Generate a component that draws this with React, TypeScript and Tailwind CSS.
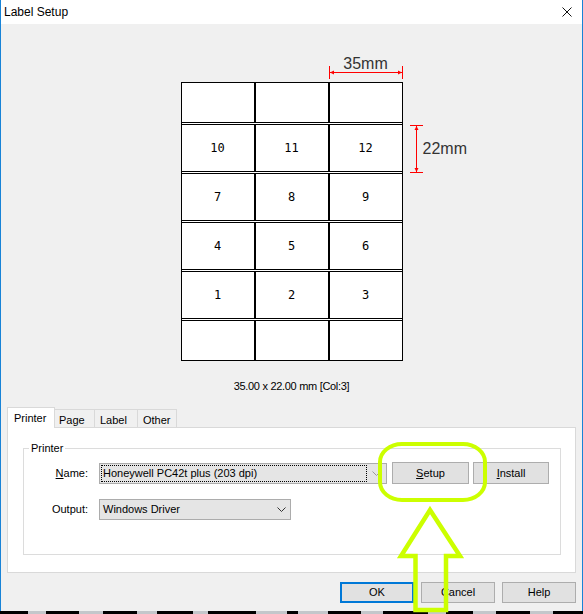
import React from 'react';

const ROWS = [
  ['10', '11', '12'],
  ['7', '8', '9'],
  ['4', '5', '6'],
  ['1', '2', '3'],
];

const TABS = ['Page', 'Label', 'Other'];

function LabelRow({ cells, className }: { cells: string[]; className: string }) {
  return (
    <div className={`grid grid-cols-[72px_74px_74px] border-black ${className}`}>
      {cells.map((c, i) => (
        <div
          key={i}
          className={`flex items-center justify-center font-['DejaVu_Sans_Mono',monospace] text-[12px] ${i > 0 ? 'border-l-2 border-black' : ''}`}
        >
          {c}
        </div>
      ))}
    </div>
  );
}

function Chevron({ color }: { color: string }) {
  return (
    <svg width="9" height="5" viewBox="0 0 9 5">
      <polyline points="0.5,0.5 4.5,4.5 8.5,0.5" fill="none" stroke={color} strokeWidth="1" />
    </svg>
  );
}

export default function App() {
  return (
    <div className="relative w-[583px] h-[614px] bg-black font-['Liberation_Sans',Arial,sans-serif] text-black">
      <div className="flex flex-col h-[611px] bg-[#f0f0f0] border-x border-[#1883d7]">
        {/* title bar */}
        <div className="flex items-center justify-between h-[24px] bg-white pl-[3px] pr-[10px] shrink-0">
          <span className="text-[12px]">Label Setup</span>
          <svg width="10" height="10" viewBox="0 0 10 10">
            <path d="M0.5 0.5 L9.5 9.5 M9.5 0.5 L0.5 9.5" stroke="#111" strokeWidth="1" />
          </svg>
        </div>

        {/* preview */}
        <div className="flex justify-center pt-[32px]">
          <div className="w-[64px]" />
          <div className="flex flex-col w-[222px]">
            <div className="flex flex-col items-end">
              <div className="w-[74px] text-center text-[16px] leading-[16px] text-[#333]">35mm</div>
              <svg width="76" height="13" viewBox="0 0 76 13" className="-mt-[6px] -mr-px">
                <line x1="1.5" y1="0" x2="1.5" y2="13" stroke="#ff0000" />
                <line x1="74.5" y1="0" x2="74.5" y2="13" stroke="#ff0000" />
                <line x1="1.5" y1="6.5" x2="74.5" y2="6.5" stroke="#ff0000" />
                <polygon points="2,6.5 6,4.5 6,8.5" fill="#ff0000" />
                <polygon points="74,6.5 70,4.5 70,8.5" fill="#ff0000" />
              </svg>
            </div>
            <div className="mt-[3px] flex flex-col gap-px bg-white border border-black">
              <LabelRow cells={['', '', '']} className="h-[40px] border-b" />
              {ROWS.map((r, i) => (
                <LabelRow key={i} cells={r} className="h-[48px] border-y" />
              ))}
              <LabelRow cells={['', '', '']} className="h-[40px] border-t" />
            </div>
          </div>
          <div className="w-[64px] pl-[7px] pt-[68px]">
            <div className="flex items-center">
              <svg width="13" height="50" viewBox="0 0 13 50" className="shrink-0">
                <line x1="0" y1="1.5" x2="13" y2="1.5" stroke="#ff0000" />
                <line x1="0" y1="48.5" x2="13" y2="48.5" stroke="#ff0000" />
                <line x1="6.5" y1="1.5" x2="6.5" y2="48.5" stroke="#ff0000" />
                <polygon points="6.5,2 4.5,6 8.5,6" fill="#ff0000" />
                <polygon points="6.5,48 4.5,44 8.5,44" fill="#ff0000" />
              </svg>
              <span className="text-[16px] leading-[16px] text-[#333] whitespace-nowrap">22mm</span>
            </div>
          </div>
        </div>

        <div className="mt-[18px] text-center text-[11px] leading-[14px] tracking-[-0.3px]">35.00 x 22.00 mm [Col:3]</div>

        {/* tabs */}
        <div className="mt-[14px] px-[6px]">
          <div className="flex items-end h-[20px]">
            <div className="relative z-10 -mb-px flex items-center h-[21px] w-[48px] pl-[6px] bg-white border-x border-t border-[#d9d9d9] text-[11px]">
              Printer
            </div>
            <div className="flex items-center h-[18px] w-[40px] pl-[4px] bg-[#f0f0f0] border-t border-r border-[#d9d9d9] text-[11px] pt-[3px]">
              {TABS[0]}
            </div>
            <div className="flex items-center h-[18px] w-[43px] pl-[5px] bg-[#f0f0f0] border-t border-r border-[#d9d9d9] text-[11px] pt-[3px]">
              {TABS[1]}
            </div>
            <div className="flex items-center h-[18px] w-[39px] pl-[5px] bg-[#f0f0f0] border-t border-r border-[#d9d9d9] text-[11px] pt-[3px]">
              {TABS[2]}
            </div>
          </div>
          <div className="h-[146px] bg-white border border-[#d9d9d9] pt-[13px] pl-[15px] pr-[14px]">
            <fieldset className="h-[114px] border border-[#dcdcdc] pt-[7px]">
              <legend className="ml-[5px] px-[2px] text-[11px] leading-[14px]">Printer</legend>
              <div className="flex items-center h-[22px]">
                <div className="w-[64px] text-right text-[11px]">
                  <u>N</u>ame:
                </div>
                <div className="ml-[11px] flex items-stretch h-[21px] w-[288px] bg-[#e5e5e5] border border-[#acacac] p-px">
                  <div className="flex-1 flex items-center border border-dotted border-black pl-px text-[11px] whitespace-nowrap overflow-hidden">
                    Honeywell PC42t plus (203 dpi)
                  </div>
                  <div className="w-[18px] flex items-center justify-center">
                    <Chevron color="#9a9a9a" />
                  </div>
                </div>
                <button className="ml-[5px] h-[22px] w-[77px] bg-[#e1e1e1] border border-[#adadad] text-[11px]">
                  <u>S</u>etup
                </button>
                <button className="ml-[4px] h-[22px] w-[76px] bg-[#e1e1e1] border border-[#adadad] text-[11px]">
                  <u>I</u>nstall
                </button>
              </div>
              <div className="flex items-center mt-[15px] h-[21px]">
                <div className="w-[64px] text-right text-[11px]">Output:</div>
                <div className="ml-[11px] flex items-center justify-between h-[21px] w-[192px] bg-[#e5e5e5] border border-[#acacac] pl-[3px] pr-[4px] text-[11px]">
                  <span>Windows Driver</span>
                  <Chevron color="#333" />
                </div>
              </div>
            </fieldset>
          </div>
        </div>

        {/* dialog buttons */}
        <div className="mt-[9px] flex justify-end gap-[7px] pr-[6px]">
          <button className="h-[21px] w-[74px] bg-[#e1e1e1] border-2 border-[#0078d7] text-[11px]">OK</button>
          <button className="h-[21px] w-[74px] bg-[#e1e1e1] border border-[#adadad] text-[11px]">Cancel</button>
          <button className="h-[21px] w-[74px] bg-[#e1e1e1] border border-[#adadad] text-[11px]">Help</button>
        </div>
      </div>

      {/* strip under the window */}
      <div className="flex h-[3px]">
        <div className="ml-[28px] w-[18px] bg-[#c4c7cb]" />
        <div className="ml-[33px] w-[24px] bg-[#c4c7cb]" />
        <div className="ml-[34px] w-[20px] bg-[#c4c7cb]" />
        <div className="ml-[36px] w-[15px] bg-[#c4c7cb]" />
        <div className="ml-[48px] w-[31px] bg-[#c4c7cb]" />
        <div className="ml-[11px] w-[30px] bg-[#c4c7cb]" />
        <div className="ml-[33px] w-[22px] bg-[#c4c7cb]" />
        <div className="ml-[45px] w-[18px] bg-[#c4c7cb]" />
        <div className="ml-[27px] w-[23px] bg-[#c4c7cb]" />
        <div className="ml-[34px] w-[23px] bg-[#c4c7cb]" />
      </div>

      {/* highlight annotation */}
      <svg className="absolute left-0 top-0 pointer-events-none" width="583" height="614" viewBox="0 0 583 614">
        <rect x="380" y="444" width="105" height="56" rx="22" ry="18" fill="none" stroke="#ccff00" strokeWidth="4" />
        <polygon
          points="430,510 460,556 446,556 446,610 415.5,610 415.5,556 401,556"
          fill="none"
          stroke="#ccff00"
          strokeWidth="4.5"
          strokeLinejoin="miter"
        />
      </svg>
    </div>
  );
}
